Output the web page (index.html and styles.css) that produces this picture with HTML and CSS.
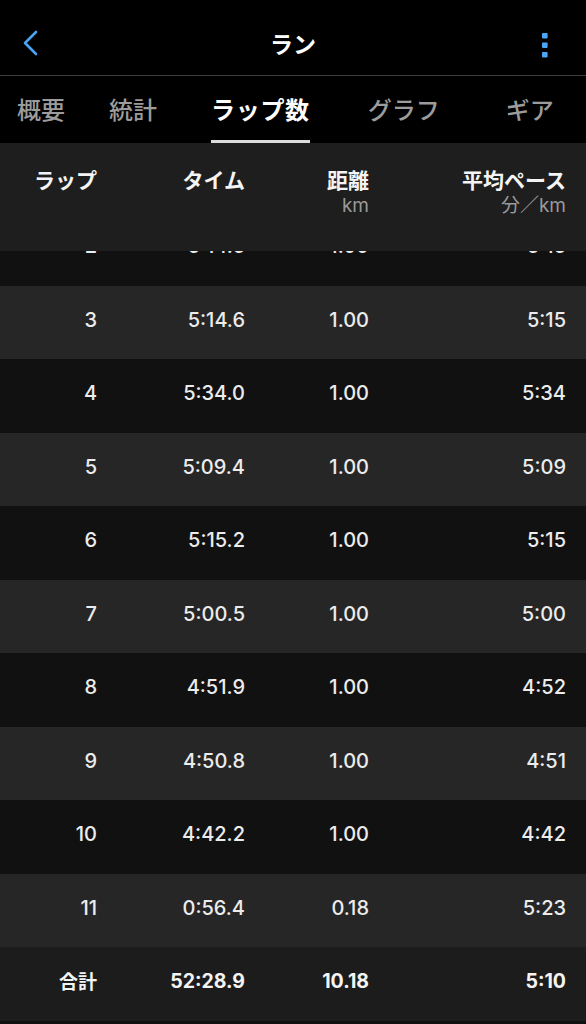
FILE: index.html
```html
<!DOCTYPE html>
<html lang="ja">
<head>
<meta charset="utf-8">
<title>ラン</title>
<link rel="stylesheet" href="styles.css">
</head>
<body>
<div class="app">
  <header class="topbar">
    <div class="topbar-left">
      <svg class="back" width="16" height="26" viewBox="0 0 16 26" aria-hidden="true">
        <path d="M14 2 L3 13 L14 24" fill="none" stroke="#4aa3f3" stroke-width="2.6" stroke-linecap="round" stroke-linejoin="round"/>
      </svg>
    </div>
    <h1 class="title">ラン</h1>
    <div class="topbar-right">
      <svg class="kebab" width="6" height="25" viewBox="0 0 6 25" aria-hidden="true">
        <rect x="0" y="0" width="5.6" height="5.4" rx="0.8" fill="#4ca6f6"/>
        <rect x="0" y="9.5" width="5.6" height="5.4" rx="0.8" fill="#4ca6f6"/>
        <rect x="0" y="19" width="5.6" height="5.4" rx="0.8" fill="#4ca6f6"/>
      </svg>
    </div>
  </header>

  <nav class="tabs">
    <span class="tab">概要</span>
    <span class="tab">統計</span>
    <span class="tab active">ラップ数</span>
    <span class="tab">グラフ</span>
    <span class="tab">ギア</span>
  </nav>

  <section class="laps">
    <div class="row thead">
      <div class="cell"><span class="h">ラップ</span></div>
      <div class="cell"><span class="h">タイム</span></div>
      <div class="cell"><span class="h">距離</span><span class="unit">km</span></div>
      <div class="cell"><span class="h">平均ペース</span><span class="unit">分／km</span></div>
    </div>
    <div class="tbody">
      <div class="row lap dark first"><div class="cell">2</div><div class="cell">5:14.5</div><div class="cell">1.00</div><div class="cell">5:15</div></div>
      <div class="row lap light"><div class="cell">3</div><div class="cell">5:14.6</div><div class="cell">1.00</div><div class="cell">5:15</div></div>
      <div class="row lap dark"><div class="cell">4</div><div class="cell">5:34.0</div><div class="cell">1.00</div><div class="cell">5:34</div></div>
      <div class="row lap light"><div class="cell">5</div><div class="cell">5:09.4</div><div class="cell">1.00</div><div class="cell">5:09</div></div>
      <div class="row lap dark"><div class="cell">6</div><div class="cell">5:15.2</div><div class="cell">1.00</div><div class="cell">5:15</div></div>
      <div class="row lap light"><div class="cell">7</div><div class="cell">5:00.5</div><div class="cell">1.00</div><div class="cell">5:00</div></div>
      <div class="row lap dark"><div class="cell">8</div><div class="cell">4:51.9</div><div class="cell">1.00</div><div class="cell">4:52</div></div>
      <div class="row lap light"><div class="cell">9</div><div class="cell">4:50.8</div><div class="cell">1.00</div><div class="cell">4:51</div></div>
      <div class="row lap dark"><div class="cell">10</div><div class="cell">4:42.2</div><div class="cell">1.00</div><div class="cell">4:42</div></div>
      <div class="row lap light"><div class="cell">11</div><div class="cell">0:56.4</div><div class="cell">0.18</div><div class="cell">5:23</div></div>
      <div class="row lap total"><div class="cell">合計</div><div class="cell">52:28.9</div><div class="cell">10.18</div><div class="cell">5:10</div></div>
    </div>
  </section>
</div>
</body>
</html>
```

FILE: styles.css
```css
* { box-sizing: border-box; }

html, body {
  margin: 0;
  padding: 0;
  background: #101010;
}

body {
  font-family: "Inter", "Noto Sans CJK JP", sans-serif;
  color: #ececec;
  width: 586px;
  height: 1024px;
  overflow: hidden;
}

.app {
  display: flex;
  flex-direction: column;
}

/* top bar */
.topbar {
  height: 76px;
  background: #000;
  border-bottom: 1px solid #3c3c3c;
  display: grid;
  grid-template-columns: 1fr auto 1fr;
  align-items: start;
}

.topbar-left {
  padding: 30px 0 0 22px;
  display: flex;
}

.topbar-right {
  padding: 33px 38px 0 0;
  display: flex;
  justify-content: flex-end;
}

.title {
  margin: 0;
  padding-top: 28px;
  font-size: 23px;
  line-height: 30px;
  font-weight: 700;
  color: #fff;
  font-family: "Noto Sans CJK JP", sans-serif;
}

/* tabs */
.tabs {
  height: 67px;
  background: #000;
  display: flex;
  padding-left: 17px;
  font-family: "Noto Sans CJK JP", sans-serif;
}

.tab {
  height: 67px;
  padding-top: 21px;
  font-size: 24px;
  line-height: 24px;
  font-weight: 500;
  color: #9c9c9c;
  border-bottom: 3px solid transparent;
  white-space: nowrap;
}

.tab:nth-child(2) { margin-left: 44px; }
.tab:nth-child(3) { margin-left: 54px; }
.tab:nth-child(4) { margin-left: 58px; }
.tab:nth-child(5) { margin-left: 66px; }

.tab.active {
  color: #fff;
  font-weight: 700;
  border-bottom-color: #dcdcdc;
  letter-spacing: 0.7px;
}

/* table */
.laps {
  display: flex;
  flex-direction: column;
}

.row {
  display: grid;
  grid-template-columns: 97px 148px 124px 197px;
  padding-right: 20px;
}

.cell {
  text-align: right;
  display: flex;
  flex-direction: column;
  align-items: flex-end;
}

.thead {
  height: 108px;
  background: #1e1e1e;
  padding-top: 25px;
  position: relative;
  z-index: 1;
}

.thead .h {
  font-family: "Noto Sans CJK JP", sans-serif;
  font-size: 21px;
  line-height: 22px;
  font-weight: 700;
  color: #f4f4f4;
  white-space: nowrap;
}

.thead .unit {
  margin-top: 5px;
  font-size: 19px;
  line-height: 21px;
  color: #9a9a9a;
  white-space: nowrap;
}

.tbody {
  overflow: hidden;
  display: flex;
  flex-direction: column;
}

.lap {
  height: 73.5px;
  padding-top: 22px;
  font-size: 20px;
  line-height: 24px;
  font-weight: 500;
  color: #ececec;
}

.lap.first { margin-top: -39px; }

.lap.light { background: #262626; }
.lap.dark { background: #111111; }

.lap.total {
  background: #1c1c1c;
  font-weight: 700;
  font-size: 19.5px;
  color: #f4f4f4;
}

.lap.total .cell:first-child {
  font-family: "Noto Sans CJK JP", sans-serif;
  font-size: 19px;
}
```
